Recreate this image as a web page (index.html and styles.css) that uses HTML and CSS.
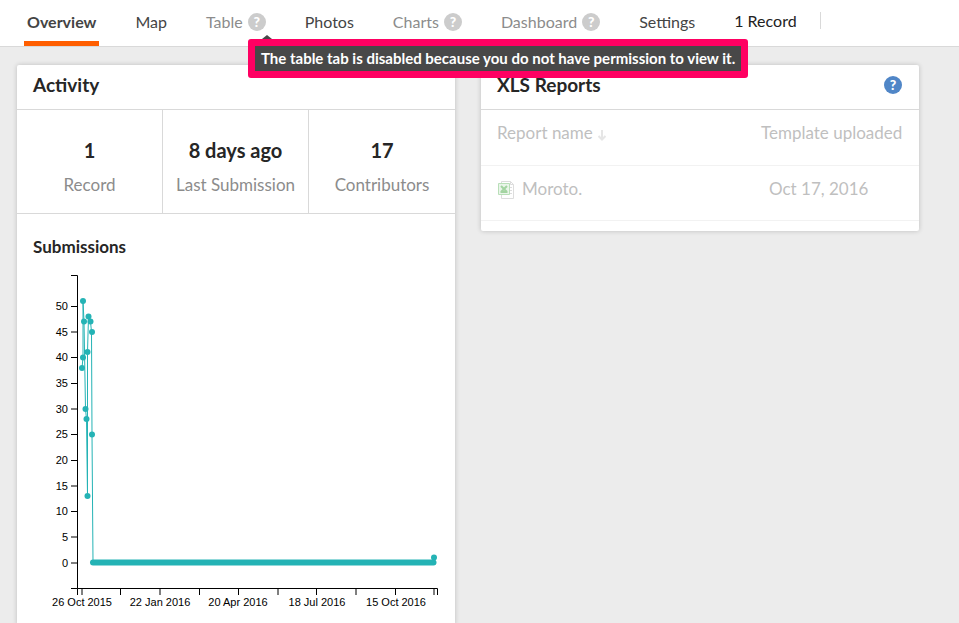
FILE: index.html
```html
<!DOCTYPE html>
<html lang="en">
<head>
<meta charset="utf-8">
<title>Overview</title>
<link rel="stylesheet" href="styles.css">
</head>
<body>
<header class="topbar">
  <nav class="tabs" aria-label="Sections">
    <a class="tab tab-active" href="#overview" aria-current="page">Overview</a>
    <a class="tab" href="#map">Map</a>
    <a class="tab tab-disabled" aria-disabled="true" aria-describedby="table-tip" href="#table">Table
      <span class="help">?</span>
      <span class="tooltip" role="tooltip" id="table-tip">The table tab is disabled because you do not have permission to view it.</span>
    </a>
    <a class="tab" href="#photos">Photos</a>
    <a class="tab tab-disabled" aria-disabled="true" href="#charts">Charts <span class="help">?</span></a>
    <a class="tab tab-disabled" aria-disabled="true" href="#dashboard">Dashboard <span class="help">?</span></a>
    <a class="tab" href="#settings">Settings</a>
  </nav>
  <p class="record-count">1 Record</p>
</header>

<main class="panels">
  <section class="card">
    <div class="card-head"><h2 class="card-title">Activity</h2></div>
    <dl class="stats">
      <div class="stat"><dt class="stat-label">Record</dt><dd class="stat-value">1</dd></div>
      <div class="stat"><dt class="stat-label">Last Submission</dt><dd class="stat-value">8 days ago</dd></div>
      <div class="stat"><dt class="stat-label">Contributors</dt><dd class="stat-value">17</dd></div>
    </dl>
    <h3 class="chart-title">Submissions</h3>
    <svg class="chart" viewBox="0 0 438 360" role="img" aria-label="Submissions per day">
      <g class="axis">
        <path d="M54 10.5H60.500V323.500H54"/>
        <path d="M60.500 330V323.500H420.500V330"/>
        <path d="M54 298H60M54 272H60M54 246.500H60M54 221H60M54 195.500H60M54 169.500H60M54 144H60M54 118.500H60M54 92.500H60M54 67H60M54 41.500H60"/>
        <path d="M65 324V330M103.500 324V330M143 324V330M182.500 324V330M221.500 324V330M261 324V330M299.500 324V330M339 324V330M378.500 324V330M417 324V330"/>
      </g>
      <g class="labels labels-y">
        <text x="51" y="302">0</text><text x="51" y="276">5</text><text x="51" y="250">10</text>
        <text x="51" y="225">15</text><text x="51" y="199">20</text><text x="51" y="173">25</text>
        <text x="51" y="148">30</text><text x="51" y="122">35</text><text x="51" y="96">40</text>
        <text x="51" y="71">45</text><text x="51" y="45">50</text>
      </g>
      <g class="labels labels-x">
        <text x="65" y="341">26 Oct 2015</text><text x="143" y="341">22 Jan 2016</text>
        <text x="221" y="341">20 Apr 2016</text><text x="300" y="341">18 Jul 2016</text>
        <text x="379" y="341">15 Oct 2016</text>
      </g>
      <polyline class="line" points="65,103 66,92.500 66,36 67,56.500 68.500,144 69.500,154 70.500,231 70.500,87 71.500,51.500 73.500,56.500 74.500,67 75,169.500 76,297 416,297 417,292.500"/>
      <g class="points">
        <circle cx="65" cy="103" r="3"/><circle cx="66" cy="92.500" r="3"/><circle cx="66" cy="36" r="3"/>
        <circle cx="67" cy="56.500" r="3"/><circle cx="68.500" cy="144" r="3"/><circle cx="69.500" cy="154" r="3"/>
        <circle cx="70.500" cy="231" r="3"/><circle cx="70.500" cy="87" r="3"/><circle cx="71.500" cy="51.500" r="3"/>
        <circle cx="73.500" cy="56.500" r="3"/><circle cx="75" cy="67" r="3"/><circle cx="75" cy="169.500" r="3"/>
        <circle cx="417" cy="292.500" r="3"/>
      </g>
      <path class="zero-run" d="M76 297.500H416.500"/>
    </svg>
  </section>

  <section class="card">
    <div class="card-head">
      <h2 class="card-title">XLS Reports</h2>
      <button class="help help-blue" type="button" aria-label="Help with XLS reports">?</button>
    </div>
    <table class="reports">
      <thead>
        <tr>
          <th scope="col">Report name
            <svg class="sort" viewBox="0 0 10 12" aria-hidden="true"><path d="M5 1V10.500M1.500 7L5 10.500L8.500 7"/></svg>
          </th>
          <th class="col-date" scope="col">Template uploaded</th>
        </tr>
      </thead>
      <tbody>
        <tr>
          <td>
            <svg class="xls" viewBox="0 0 16 18" aria-hidden="true">
              <path class="xls-page" d="M3.500 2V.5H12.500L15.500 3.500V17.500H3.500V14M12.500 .5V3.500H15.500M12 6.500H14M12 9.500H14M12 12.500H14"/>
              <path class="xls-box" d="M.5 2.500H11.500V13.500H.5Z"/>
              <path class="xls-x" d="M3 5L9 11M9 5L3 11M2.500 11H9.500"/>
            </svg>Moroto.
          </td>
          <td class="col-date">Oct 17, 2016</td>
        </tr>
      </tbody>
    </table>
  </section>
</main>
</body>
</html>
```
FILE: styles.css
```css
* { box-sizing: border-box; }

body {
  margin: 0;
  background: #ececec;
  color: #444;
  font: 17px/24px Lato, "Liberation Sans", sans-serif;
}

h2, h3, p, dl, dd { margin: 0; }

.topbar {
  display: flex;
  align-items: flex-start;
  gap: 36px;
  height: 47px;
  padding-left: 24px;
  background: #fff;
  border-bottom: 1px solid #d9d9d9;
  font-size: 16px;
}

.tabs { display: flex; gap: 33px; }

.tab {
  position: relative;
  display: flex;
  align-items: center;
  gap: 5px;
  height: 46px;
  padding: 2px 3px 0;
  border-bottom: 5px solid transparent;
  color: #444;
  text-decoration: none;
  white-space: nowrap;
}

.tab-active { border-color: #ff5e00; font-weight: 700; }
.tab-disabled { color: #8c8c8c; }

.help {
  width: 18px;
  height: 18px;
  padding: 0;
  border: 0;
  border-radius: 50%;
  background: #ccc;
  color: #fff;
  font: 900 14px/18px Lato, "Liberation Sans", sans-serif;
  text-align: center;
}

.help-blue { background: #5086c7; }

.tooltip {
  position: absolute;
  z-index: 2;
  top: 39px;
  left: 45px;
  padding: 0 6px;
  border: 7px solid #ff0062;
  border-radius: 3px;
  background: #484848;
  color: #fff;
  font-size: 15px;
  font-weight: 700;
  line-height: 25px;
}

.tooltip::before {
  content: "";
  position: absolute;
  top: -11px;
  left: 7px;
  border: solid transparent;
  border-width: 0 5px 4px;
  border-bottom-color: #484848;
}

.record-count {
  margin-top: 12px;
  padding-right: 23px;
  border-right: 1px solid #d9d9d9;
  color: #222;
  line-height: 17px;
}

.panels {
  display: grid;
  grid-template-columns: 1fr 1fr;
  align-items: start;
  gap: 26px;
  padding: 18px 40px 0 17px;
}

.card {
  background: #fff;
  border-radius: 2px;
  box-shadow: 0 0 5px rgba(0, 0, 0, .2);
}

.card-head {
  display: flex;
  align-items: center;
  justify-content: space-between;
  height: 45px;
  padding: 0 17px 4px 16px;
  border-bottom: 1px solid #d9d9d9;
}

.card-title { color: #262626; font-size: 19px; font-weight: 700; }

.stats {
  display: grid;
  grid-template-columns: repeat(3, 1fr);
  border-bottom: 1px solid #d9d9d9;
}

.stat {
  display: flex;
  flex-direction: column-reverse;
  gap: 11px;
  padding: 28px 0 16px;
  text-align: center;
}

.stat:not(:last-child) { border-right: 1px solid #d9d9d9; }
.stat-value { color: #262626; font-size: 20px; font-weight: 700; }
.stat-label { color: #8c8c8c; }

.chart-title {
  padding: 21px 16px 6px;
  color: #262626;
  font-size: 17px;
  font-weight: 700;
}

.chart { display: block; width: 100%; }
.axis { fill: none; stroke: #000; }
.labels { font: 11px "Liberation Sans", sans-serif; fill: #000; }
.labels-y { text-anchor: end; }
.labels-x { text-anchor: middle; }
.line { fill: none; stroke: #24b3b5; }
.points { fill: #24b3b5; }
.zero-run { stroke: #24b3b5; stroke-width: 6; stroke-linecap: round; }

.reports {
  width: 100%;
  margin-bottom: 10px;
  border-collapse: collapse;
  color: #bfbfbf;
}

.reports th, .reports td {
  height: 55px;
  padding: 0 16px 8px;
  border-bottom: 1px solid #f2f2f2;
  font-weight: 400;
  text-align: left;
}

.reports .col-date { width: 176px; padding-left: 18px; padding-right: 0; }
.reports td.col-date { padding-left: 26px; }

.sort {
  width: 10px;
  height: 12px;
  vertical-align: -2px;
  fill: none;
  stroke: #e6e6e6;
  stroke-width: 2;
}

.xls {
  width: 16px;
  height: 18px;
  margin: 0 8px 0 1px;
  vertical-align: -4px;
  fill: none;
}

.xls-page { stroke: #ddd; }
.xls-box { fill: #eaf5ea; stroke: #b9dfb8; }
.xls-x { stroke: #a3d4a1; stroke-width: 2; }
```
